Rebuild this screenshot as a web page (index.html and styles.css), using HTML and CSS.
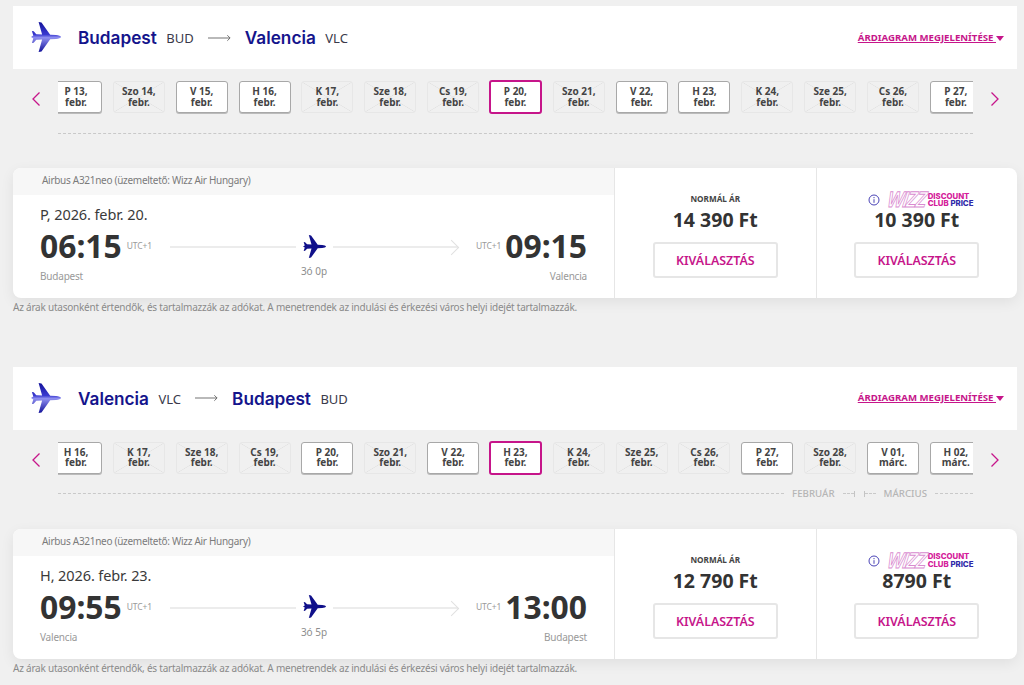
FILE: index.html
```html
<!DOCTYPE html>
<html lang="hu">
<head>
<meta charset="utf-8">
<title>Járatok</title>
<link rel="stylesheet" href="styles.css">
</head>
<body>
<svg class="defs" width="0" height="0" aria-hidden="true">
  <defs>
    <linearGradient id="planeGrad" x1="0" y1="0" x2="0" y2="1">
      <stop offset="0" stop-color="#13129a"/>
      <stop offset="0.42" stop-color="#3a3ad0"/>
      <stop offset="0.52" stop-color="#8f8ff0"/>
      <stop offset="1" stop-color="#13129a"/>
    </linearGradient>
    <symbol id="plane" viewBox="0 0 30 30">
      <path d="M30 15c0-1-2.600-1.700-5-1.900l-5.800-.3L10.500.6 7.600 0l3.500 12.500-5.800-.3L2.700 9.300.9 9l1.400 4.600L0 15l2.300 1.400L.9 21l1.800-.3 2.600-2.900 5.800-.3L7.600 30l2.900-.6 8.700-12.200 5.800-.3c2.400-.2 5-.9 5-1.900z"/>
    </symbol>
  </defs>
</svg>

<section class="leg">
  <header class="route">
    <svg class="route-plane"><use href="#plane"/></svg>
    <span class="city">Budapest</span><span class="iata">BUD</span>
    <svg class="route-arrow" viewBox="0 0 25 8"><path d="M0 4h24M21 1l3 3-3 3"/></svg>
    <span class="city">Valencia</span><span class="iata">VLC</span>
    <a class="chart-link"><span class="chart-text">ÁRDIAGRAM MEGJELENÍTÉSE </span><i class="caret"></i></a>
  </header>
  <div class="strip-row">
    <svg class="chev" viewBox="0 0 10 16"><path d="M8.500 1.500 2 8l6.500 6.500"/></svg>
    <div class="strip">
      <div class="chips">
        <div class="chip on">P 13,<br>febr.</div>
        <div class="chip off">Szo 14,<br>febr.</div>
        <div class="chip on">V 15,<br>febr.</div>
        <div class="chip on">H 16,<br>febr.</div>
        <div class="chip off">K 17,<br>febr.</div>
        <div class="chip off">Sze 18,<br>febr.</div>
        <div class="chip off">Cs 19,<br>febr.</div>
        <div class="chip sel">P 20,<br>febr.</div>
        <div class="chip off">Szo 21,<br>febr.</div>
        <div class="chip on">V 22,<br>febr.</div>
        <div class="chip on">H 23,<br>febr.</div>
        <div class="chip off">K 24,<br>febr.</div>
        <div class="chip off">Sze 25,<br>febr.</div>
        <div class="chip off">Cs 26,<br>febr.</div>
        <div class="chip on">P 27,<br>febr.</div>
      </div>
    </div>
    <svg class="chev" viewBox="0 0 10 16"><path d="M1.500 1.500 8 8l-6.500 6.500"/></svg>
  </div>
  <div class="months"><span class="dash"></span></div>
  <article class="card">
    <div class="flight">
      <div class="flight-head">Airbus A321neo (üzemeltető: Wizz Air Hungary)</div>
      <div class="flight-body">
        <div class="date">P, 2026. febr. 20.</div>
        <div class="times">
          <div class="time-col"><div class="time-line"><span class="time">06:15</span><span class="utc">UTC+1</span></div><div class="place">Budapest</div></div>
          <div class="track">
            <div class="track-line"><span class="rule"></span><svg class="track-plane"><use href="#plane"/></svg><span class="rule arrowed"></span></div>
            <div class="duration">3ó 0p</div>
          </div>
          <div class="time-col right"><div class="time-line"><span class="utc">UTC+1</span><span class="time">09:15</span></div><div class="place">Valencia</div></div>
        </div>
      </div>
    </div>
    <div class="fare">
      <div class="fare-label">NORMÁL ÁR</div>
      <div class="price">14 390 Ft</div>
      <button class="pick">KIVÁLASZTÁS</button>
    </div>
    <div class="fare">
      <div class="club"><svg class="info" viewBox="0 0 12 12"><circle cx="6" cy="6" r="5"/><path d="M6 5.200v3.600M6 3v1.200"/></svg><span class="wizz">WIZZ</span><span class="club-text"><span>DISCOUNT</span><span>CLUB <b>PRICE</b></span></span></div>
      <div class="price">10 390 Ft</div>
      <button class="pick">KIVÁLASZTÁS</button>
    </div>
  </article>
  <p class="note">Az árak utasonként értendők, és tartalmazzák az adókat. A menetrendek az indulási és érkezési város helyi idejét tartalmazzák.</p>
</section>

<section class="leg">
  <header class="route">
    <svg class="route-plane"><use href="#plane"/></svg>
    <span class="city">Valencia</span><span class="iata">VLC</span>
    <svg class="route-arrow" viewBox="0 0 25 8"><path d="M0 4h24M21 1l3 3-3 3"/></svg>
    <span class="city">Budapest</span><span class="iata">BUD</span>
    <a class="chart-link"><span class="chart-text">ÁRDIAGRAM MEGJELENÍTÉSE </span><i class="caret"></i></a>
  </header>
  <div class="strip-row">
    <svg class="chev" viewBox="0 0 10 16"><path d="M8.500 1.500 2 8l6.500 6.500"/></svg>
    <div class="strip">
      <div class="chips">
        <div class="chip on">H 16,<br>febr.</div>
        <div class="chip off">K 17,<br>febr.</div>
        <div class="chip off">Sze 18,<br>febr.</div>
        <div class="chip off">Cs 19,<br>febr.</div>
        <div class="chip on">P 20,<br>febr.</div>
        <div class="chip off">Szo 21,<br>febr.</div>
        <div class="chip on">V 22,<br>febr.</div>
        <div class="chip sel">H 23,<br>febr.</div>
        <div class="chip off">K 24,<br>febr.</div>
        <div class="chip off">Sze 25,<br>febr.</div>
        <div class="chip off">Cs 26,<br>febr.</div>
        <div class="chip on">P 27,<br>febr.</div>
        <div class="chip off">Szo 28,<br>febr.</div>
        <div class="chip on">V 01,<br>márc.</div>
        <div class="chip on">H 02,<br>márc.</div>
      </div>
    </div>
    <svg class="chev" viewBox="0 0 10 16"><path d="M1.500 1.500 8 8l-6.500 6.500"/></svg>
  </div>
  <div class="months"><span class="dash"></span><span class="month">FEBRUÁR</span><span class="dash short"></span><span class="tick"></span><span class="tick second"></span><span class="dash short"></span><span class="month">MÁRCIUS</span><span class="dash end"></span></div>
  <article class="card">
    <div class="flight">
      <div class="flight-head">Airbus A321neo (üzemeltető: Wizz Air Hungary)</div>
      <div class="flight-body">
        <div class="date">H, 2026. febr. 23.</div>
        <div class="times">
          <div class="time-col"><div class="time-line"><span class="time">09:55</span><span class="utc">UTC+1</span></div><div class="place">Valencia</div></div>
          <div class="track">
            <div class="track-line"><span class="rule"></span><svg class="track-plane"><use href="#plane"/></svg><span class="rule arrowed"></span></div>
            <div class="duration">3ó 5p</div>
          </div>
          <div class="time-col right"><div class="time-line"><span class="utc">UTC+1</span><span class="time">13:00</span></div><div class="place">Budapest</div></div>
        </div>
      </div>
    </div>
    <div class="fare">
      <div class="fare-label">NORMÁL ÁR</div>
      <div class="price">12 790 Ft</div>
      <button class="pick">KIVÁLASZTÁS</button>
    </div>
    <div class="fare">
      <div class="club"><svg class="info" viewBox="0 0 12 12"><circle cx="6" cy="6" r="5"/><path d="M6 5.200v3.600M6 3v1.200"/></svg><span class="wizz">WIZZ</span><span class="club-text"><span>DISCOUNT</span><span>CLUB <b>PRICE</b></span></span></div>
      <div class="price">8790 Ft</div>
      <button class="pick">KIVÁLASZTÁS</button>
    </div>
  </article>
  <p class="note">Az árak utasonként értendők, és tartalmazzák az adókat. A menetrendek az indulási és érkezési város helyi idejét tartalmazzák.</p>
</section>
</body>
</html>
```
FILE: styles.css
```css
* { box-sizing: border-box; }
html, body { margin: 0; padding: 0; }
body {
  width: 1024px;
  background: #f0f0f0;
  font-family: "Noto Sans", "Open Sans", sans-serif;
  color: #333;
}
.defs { position: absolute; }
.leg { padding: 6px 7px 0 13px; }
.leg + .leg { margin-top: 46.5px; }

/* route header */
.route {
  height: 63px;
  background: #fff;
  display: flex;
  align-items: center;
  padding: 0 13px 0 18px;
}
.route-plane { width: 30px; height: 30px; fill: url(#planeGrad); margin: -1px 17px 0 0; flex: none; }
.city {
  font-family: Inter, "Liberation Sans", sans-serif;
  font-weight: 600;
  font-size: 17.2px;
  color: #14148c;
  margin: 0 9.5px 0 0;
}
.iata { font-size: 13px; color: #3a3a4a; margin-top: 1px; }
.route-arrow { width: 23px; height: 8px; margin: 0 14px 0 14px; fill: none; stroke: #666; stroke-width: 1; }
.chart-link { margin: -1px 0 0 auto; display: flex; align-items: center; color: #c6158a; font-size: 9.65px; font-weight: 700; }
.chart-text { text-decoration: underline; white-space: pre; }
.caret {
  width: 0; height: 0; margin-top: 2px;
  border-left: 4px solid transparent;
  border-right: 4px solid transparent;
  border-top: 5px solid #c6158a;
}

/* date strip */
.strip-row { display: flex; align-items: center; height: 34px; margin: 11px -3px 0 18px; }
.chev { width: 10px; height: 16px; margin-top: 4px; fill: none; stroke: #c6158a; stroke-width: 1.3; flex: none; }
.strip { width: 915px; margin: 0 17px; overflow: hidden; flex: none; }
.chips { display: flex; align-items: center; height: 34px; gap: 10.85px; margin-left: -8px; width: 940px; }
.chip {
  flex: none;
  width: 52px;
  height: 32px;
  border-radius: 3px;
  font-size: 10px;
  line-height: 10.5px;
  font-weight: 700;
  text-align: center;
  color: #444;
  padding-top: 4px;
}
.chip.on { background: #fff; border: 1px solid #a8a8a8; box-shadow: 0 1px 0 #bbb; }
.chip.off {
  border: 1px solid #e7e7e7;
  background:
    linear-gradient(to top right, transparent calc(50% - .6px), #e2e2e2 50%, transparent calc(50% + .6px)),
    linear-gradient(to bottom right, transparent calc(50% - .6px), #e2e2e2 50%, transparent calc(50% + .6px));
}
.chip.sel { background: #fff; border: 2px solid #c6158a; width: 53px; height: 34px; margin-left: -1px; }

/* month bar */
.months {
  display: flex;
  align-items: center;
  margin: 13px 44px 0 45px;
  height: 12px;
  font-size: 9.7px;
  color: #b5b5b5;
  font-weight: 500;
}
.dash { flex: 1; border-top: 1px dashed #c9c9c9; }
.dash.short { flex: none; width: 11px; }
.dash.end { flex: none; width: 38px; }
.month { margin: 0 8px; }
.tick { width: 1px; height: 6px; background: #c4c4c4; }
.tick.second { margin-left: 9px; }

/* flight card */
.card {
  display: flex;
  height: 130px;
  margin-top: 29px;
  background: #fff;
  border-radius: 8px;
  box-shadow: 0 4px 14px rgba(0,0,0,.07);
  overflow: hidden;
}
.flight { width: 601px; flex: none; }
.flight-head { height: 27px; background: #f7f7f7; font-size: 10px; letter-spacing: -.29px; line-height: 25px; color: #7b7b7b; padding-left: 29px; }
.flight-body { padding: 9px 27px 0; }
.date { font-size: 14.5px; letter-spacing: -.1px; line-height: 20px; color: #3a3a3a; }
.times { display: flex; margin-top: 4px; }
.time-col { flex: none; width: 130px; }
.time-col.right { width: 129px; text-align: right; }
.time-line { display: flex; align-items: center; height: 36px; }
.time { font-size: 31.8px; font-weight: 700; color: #333; line-height: 36px; }
.utc { font-size: 8.5px; letter-spacing: -.1px; color: #9a9a9a; margin: -1px 0 0 5px; }
.place { font-size: 10px; letter-spacing: -.2px; color: #999; line-height: 14px; margin-top: 5px; }
.time-col.right .time-line { justify-content: flex-end; }
.time-col.right .utc { margin: -1px 4px 0 0; }
.track { flex: 1; }
.track-line { display: flex; align-items: center; height: 36px; gap: 7px; }
.rule { flex: 1; height: 2px; background: #ececec; position: relative; margin-top: 2px; }
.rule.arrowed::after {
  content: "";
  position: absolute;
  right: 1px;
  top: -4px;
  width: 10px;
  height: 10px;
  border-top: 1px solid #e0e0e0;
  border-right: 1px solid #e0e0e0;
  transform: rotate(45deg);
}
.track-plane { width: 23px; height: 23px; fill: #10108a; flex: none; }
.duration { text-align: center; font-size: 10px; color: #8d8d8d; line-height: 12px; margin-top: 1px; }

/* fares */
.fare {
  flex: 1;
  border-left: 1px solid #e6e6e6;
  display: flex;
  flex-direction: column;
  align-items: center;
}
.fare-label { margin-top: 25px; font-size: 8.2px; font-weight: 700; color: #444; line-height: 11px; }
.club { margin: 24px 0 0 8px; height: 16px; display: flex; align-items: center; }
.info { width: 12px; height: 12px; fill: none; stroke: #4a43b5; stroke-width: 1; margin-right: 8px; }
.wizz {
  font-family: "Liberation Sans", sans-serif;
  font-style: italic;
  font-weight: 700;
  font-size: 17px;
  letter-spacing: -1px;
  color: #fff;
  -webkit-text-stroke: .7px #d98bd0;
  margin-right: 2px;
  transform: skewX(-10deg) scaleY(1.3);
}
.club-text { display: flex; flex-direction: column; font-family: Inter, sans-serif; font-weight: 800; font-size: 7.8px; line-height: 7.5px; color: #d4209a; }
.club-text b { color: #2f2aa8; font-weight: 800; }
.price { font-size: 19.5px; line-height: 24px; font-weight: 700; color: #333; margin-top: 4px; }
.club + .price { margin-top: 0; }
.pick {
  margin-top: 10px;
  width: 125px;
  height: 36px;
  background: #fff;
  border: 2px solid #e6e6e6;
  border-radius: 3px;
  color: #c6158a;
  font-family: "Noto Sans", sans-serif;
  font-size: 12.4px;
  font-weight: 600;
  padding: 1px 0 0;
}
.note { margin: 2px 0 0; font-size: 10px; letter-spacing: -.23px; line-height: 14px; color: #8a8a8a; white-space: nowrap; }
```
